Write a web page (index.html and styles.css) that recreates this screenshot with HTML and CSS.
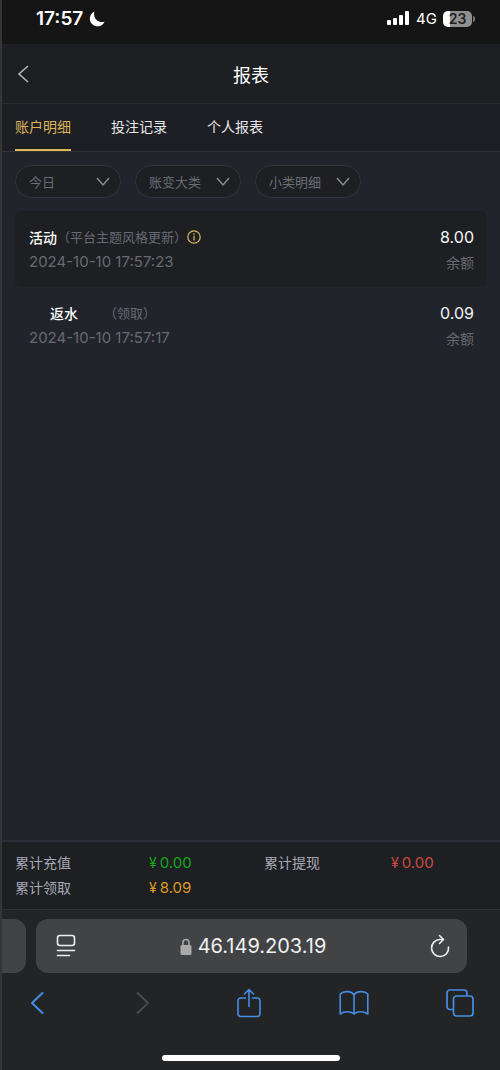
FILE: index.html
```html
<!DOCTYPE html>
<html lang="zh-CN">
<head>
<meta charset="utf-8">
<meta name="viewport" content="width=device-width, initial-scale=1">
<title>报表</title>
<link rel="stylesheet" href="styles.css">
</head>
<body>
<div class="status">
  <div class="status-group">
    <span class="clock">17:57</span>
    <svg width="16" height="16" viewBox="0 0 16 16"><path d="M5.500.6A7.700 7.700 0 1 0 15.600 10.800C9 12.500 3.500 7 5.500.6Z" fill="#fff"/></svg>
  </div>
  <div class="status-group">
    <svg width="23" height="15" viewBox="0 0 23 15" fill="#fff"><rect x="0" y="9" width="4" height="5" rx="1"/><rect x="6" y="7" width="4" height="7" rx="1"/><rect x="12" y="4" width="4" height="10" rx="1"/><rect x="18" y="0" width="4" height="14" rx="1"/></svg>
    <span class="network">4G</span>
    <span class="battery">23</span>
  </div>
</div>

<header class="header">
  <button class="icon-button" type="button" aria-label="返回"><svg width="12" height="18" viewBox="0 0 12 18" fill="none" stroke="#b4b6bb" stroke-width="1.6"><path d="M11 1 2 9l9 8"/></svg></button>
  <h1 class="title">报表</h1>
</header>

<nav class="tabs">
  <a class="tab active" href="#account">账户明细</a>
  <a class="tab" href="#bets">投注记录</a>
  <a class="tab" href="#personal">个人报表</a>
</nav>

<main class="content" id="account">
  <form class="filters">
    <div class="filter"><select class="filter-select" aria-label="日期"><option>今日</option></select><svg class="chevron" width="14" height="10" viewBox="0 0 14 10"><path d="m1 1 6 7 6-7"/></svg></div>
    <div class="filter"><select class="filter-select" aria-label="账变大类"><option>账变大类</option></select><svg class="chevron" width="14" height="10" viewBox="0 0 14 10"><path d="m1 1 6 7 6-7"/></svg></div>
    <div class="filter"><select class="filter-select" aria-label="小类明细"><option>小类明细</option></select><svg class="chevron" width="14" height="10" viewBox="0 0 14 10"><path d="m1 1 6 7 6-7"/></svg></div>
  </form>
  <ul class="records">
    <li class="record shaded">
      <div class="record-row">
        <div class="kind"><span class="name">活动</span><span class="note">（平台主题风格更新）</span><button class="icon-button" type="button" aria-label="详情"><svg width="14" height="14" viewBox="0 0 14 14" fill="none" stroke="#d9b85c" stroke-width="1.2"><circle cx="7" cy="7" r="6.200"/><path d="M7 5.800v4.700M7 3.200v1.500"/></svg></button></div>
        <span class="amount">8.00</span>
      </div>
      <div class="record-row"><time class="time">2024-10-10 17:57:23</time><span>余额</span></div>
    </li>
    <li class="record">
      <div class="record-row">
        <div class="kind"><span class="name spaced">返水</span><span class="note">（领取）</span></div>
        <span class="amount">0.09</span>
      </div>
      <div class="record-row"><time class="time">2024-10-10 17:57:17</time><span>余额</span></div>
    </li>
  </ul>
</main>

<dl class="totals">
  <div class="total"><dt>累计充值</dt><dd class="green"><span class="yen">¥</span>0.00</dd></div>
  <div class="total"><dt>累计提现</dt><dd class="red"><span class="yen">¥</span>0.00</dd></div>
  <div class="total"><dt>累计领取</dt><dd class="orange"><span class="yen">¥</span>8.09</dd></div>
</dl>

<footer class="browser">
  <div class="address-row">
    <div class="previous-page"></div>
    <div class="address">
      <button class="icon-button" type="button" aria-label="页面设置"><svg width="20" height="24" viewBox="0 0 20 24" fill="none" stroke="#eee" stroke-width="1.600" stroke-linecap="round"><rect x="1.500" y="1.500" width="17" height="10" rx="2.500"/><path d="M1.500 16.500h17M1.500 21.500h12"/></svg></button>
      <div class="site"><svg width="12" height="17" viewBox="0 0 12 17"><path d="M3 8V4.500a3 3 0 0 1 6 0V8" fill="none" stroke="#aaa" stroke-width="1.500"/><rect x=".5" y="7" width="11" height="10" rx="1.500" fill="#aaa"/></svg><span>46.149.203.19</span></div>
      <button class="icon-button" type="button" aria-label="刷新"><svg width="20" height="24" viewBox="0 0 20 24" fill="none" stroke="#eee" stroke-width="1.600" stroke-linecap="round" stroke-linejoin="round"><path d="M13.500 5.500H10A8.500 8.500 0 1 0 18.500 13M9.500 1.500l4 4-4 4"/></svg></button>
    </div>
  </div>
  <div class="toolbar">
    <button class="icon-button" type="button" aria-label="后退"><svg width="14" height="24" viewBox="0 0 14 24" fill="none" stroke="#448de5" stroke-width="2" stroke-linecap="round" stroke-linejoin="round"><path d="M12.500 2 2 12l10.500 10"/></svg></button>
    <button class="icon-button" type="button" aria-label="前进" disabled><svg width="14" height="24" viewBox="0 0 14 24" fill="none" stroke="#4b4c4e" stroke-width="1.800" stroke-linecap="round" stroke-linejoin="round"><path d="m1.500 2 10.500 10L1.500 22"/></svg></button>
    <button class="icon-button" type="button" aria-label="分享"><svg width="24" height="30" viewBox="0 0 24 30" fill="none" stroke="#448de5" stroke-width="1.600" stroke-linecap="round" stroke-linejoin="round"><path d="M8.500 10H4a3 3 0 0 0-3 3v12.500a3 3 0 0 0 3 3h16a3 3 0 0 0 3-3V13a3 3 0 0 0-3-3h-4.500M12 18.500V1.500M7.500 6 12 1.500 16.500 6"/></svg></button>
    <button class="icon-button" type="button" aria-label="书签"><svg width="30" height="26" viewBox="0 0 30 26" fill="none" stroke="#448de5" stroke-width="1.600" stroke-linejoin="round"><path d="M15 5C12.500.8 4.500.6 1.200 4v20c4-3 10.500-3 13.800 0 3.300-3 9.800-3 13.800 0V4C25.500.6 17.500.8 15 5v19"/></svg></button>
    <button class="icon-button" type="button" aria-label="标签页"><svg width="28" height="28" viewBox="0 0 28 28" fill="none" stroke="#448de5" stroke-width="1.700"><path d="M7.500 20.500H4a3 3 0 0 1-3-3V4a3 3 0 0 1 3-3h14a3 3 0 0 1 3 3v3"/><rect x="7.500" y="7" width="19.500" height="20" rx="3"/></svg></button>
  </div>
  <div class="home-bar"></div>
</footer>
</body>
</html>
```
FILE: styles.css
```css
* {
  box-sizing: border-box;
}

body {
  display: flex;
  flex-direction: column;
  min-height: 100vh;
  margin: 0;
  border-left: 2px solid #353535;
  background: #22242b;
  color: #fff;
  font-family: Inter, "Noto Sans CJK SC", sans-serif;
  font-size: 14px;
}

.icon-button {
  display: flex;
  padding: 0;
  border: 0;
  background: none;
}

.status {
  display: flex;
  align-items: center;
  justify-content: space-between;
  height: 44px;
  padding: 0 28px 7px 34px;
  background: #151516;
}

.status-group {
  display: flex;
  align-items: center;
  gap: 6px;
}

.clock {
  font-size: 19px;
  font-weight: 600;
}

.network {
  font-size: 15px;
}

.battery {
  position: relative;
  width: 29px;
  border-radius: 5px;
  background: linear-gradient(to right, #fff 7px, #909092 7px);
  color: #222;
  font-size: 14px;
  font-weight: 600;
  line-height: 16px;
  text-align: center;
}

.battery::after {
  content: "";
  position: absolute;
  top: 5px;
  right: -3px;
  width: 2px;
  height: 6px;
  border-radius: 0 2px 2px 0;
  background: #777;
}

.header {
  display: grid;
  grid-template-columns: 1fr auto 1fr;
  align-items: center;
  height: 60px;
  padding: 0 15px;
  border-bottom: 1px solid #292a34;
  background: #1e1f23;
}

.title {
  margin: 0;
  font-size: 18px;
  font-weight: 400;
}

.tabs {
  display: flex;
  gap: 40px;
  height: 48px;
  padding: 0 13px;
  border-bottom: 1px solid #31323b;
  background: #1e1f25;
}

.tab {
  border-bottom: 2px solid transparent;
  color: #e8e8ea;
  line-height: 46px;
  text-decoration: none;
}

.tab.active {
  border-color: #dcb955;
  color: #dcb55b;
}

.content {
  flex: 1;
  padding: 13px;
}

.filters {
  display: flex;
  gap: 14px;
  margin-bottom: 13px;
}

.filter {
  position: relative;
  width: 106px;
}

.filter-select {
  width: 100%;
  height: 33px;
  padding: 0 13px;
  border: 1px solid #32343c;
  border-radius: 17px;
  appearance: none;
  background: #1e1f23;
  color: #6b6d75;
  font: inherit;
  font-size: 13px;
}

.chevron {
  position: absolute;
  top: 12px;
  right: 11px;
  fill: none;
  stroke: #8a8c92;
  stroke-width: 1.4;
  pointer-events: none;
}

.records {
  margin: 0;
  padding: 0;
  list-style: none;
}

.record {
  padding: 13px 13px 13px 14px;
  border-radius: 6px;
}

.record.shaded {
  background: #1e1f23;
}

.record-row {
  display: flex;
  align-items: center;
  justify-content: space-between;
  height: 25px;
  color: #686a72;
}

.kind {
  display: flex;
  align-items: center;
}

.name {
  color: #fff;
  font-weight: 500;
}

.name.spaced {
  margin: 0 26px 0 21px;
}

.note {
  font-size: 13px;
}

.time {
  font-size: 15px;
}

.amount {
  color: #f4f4f5;
  font-size: 16px;
}

.totals {
  display: grid;
  grid-template-columns: 1fr 1fr;
  margin: 0;
  padding: 8px 13px 9px;
  border-top: 2px solid #2c2d36;
  border-bottom: 1px solid #303134;
  background: #1e1f23;
  line-height: 25px;
}

.total {
  display: flex;
}

.total:nth-child(even) {
  padding-left: 13px;
}

.total dt {
  width: 56px;
  color: #a7a9b5;
}

.total dd {
  margin-left: 78px;
  font-size: 15px;
}

.total:nth-child(even) dd {
  margin-left: 71px;
}

.yen {
  margin-right: 3px;
  font-size: 14px;
}

.green {
  color: #13a81b;
}

.red {
  color: #c94940;
}

.orange {
  color: #dc9b27;
}

.browser {
  padding-top: 9px;
  background: #232425;
}

.address-row {
  display: flex;
  gap: 10px;
  padding-right: 33px;
}

.previous-page {
  width: 24px;
  border-radius: 0 12px 12px 0;
  background: #424344;
}

.address {
  display: flex;
  flex: 1;
  align-items: center;
  justify-content: space-between;
  height: 54px;
  padding: 0 17px 0 20px;
  border-radius: 12px;
  background: #424344;
}

.site {
  display: flex;
  align-items: center;
  gap: 6px;
  color: #f1f1f2;
  font-size: 20px;
}

.toolbar {
  display: flex;
  align-items: center;
  justify-content: space-between;
  height: 60px;
  padding: 0 25px 0 20px;
}

.toolbar .icon-button {
  justify-content: center;
  width: 30px;
}

.home-bar {
  width: 178px;
  height: 6px;
  margin: 22px auto 9px;
  border-radius: 3px;
  background: #fff;
}
```
